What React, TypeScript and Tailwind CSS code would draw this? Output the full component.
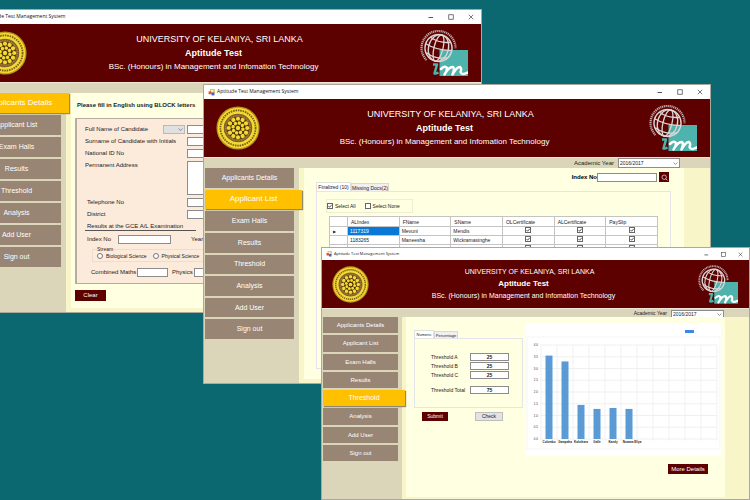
import React from "react";

type Size = "lg" | "sm";

const NAV = [
  "Applicants Details",
  "Applicant List",
  "Exam Halls",
  "Results",
  "Threshold",
  "Analysis",
  "Add User",
  "Sign out",
];

const BOX = "min-w-0 rounded-none border border-[#8c8c8c] bg-white outline-none";

function AppIcon({ size }: { size: Size }) {
  return (
    <svg viewBox="0 0 12 12" className={size === "lg" ? "size-[7px]" : "size-[6px]"} aria-hidden="true">
      <rect x="4" y="1" width="7" height="6" fill="#f4c65a" stroke="#dba94c" />
      <rect x="1" y="4" width="5" height="5" fill="#d9583b" />
      <rect x="6" y="6" width="5" height="5" fill="#2f6fc4" />
      <rect x="5" y="2" width="4" height="3" fill="#fff" opacity="0.7" />
    </svg>
  );
}

function Emblem({ className }: { className: string }) {
  const spokes = (n: number) => Array.from({ length: n }, (_, i) => (i * 360) / n);
  return (
    <svg viewBox="0 0 100 100" className={className} role="img" aria-label="University crest">
      <circle cx="50" cy="50" r="49" fill="#b8961e" />
      <circle cx="50" cy="50" r="46" fill="#f0d832" />
      <circle cx="50" cy="50" r="40" fill="none" stroke="#7d5a16" strokeWidth="4" strokeDasharray="3.5 2" />
      <circle cx="50" cy="50" r="34" fill="#86602c" stroke="#f2dc38" strokeWidth="3" />
      <circle cx="50" cy="50" r="28" fill="none" stroke="#b08c34" strokeWidth="2.5" strokeDasharray="2.5 2.5" />
      <circle cx="50" cy="50" r="25" fill="#4d2a08" />
      {spokes(12).map((a) => (
        <circle key={a} cx="50" cy="29" r="4.8" fill="#f0da34" transform={`rotate(${a} 50 50)`} />
      ))}
      {spokes(8).map((a) => (
        <circle key={a} cx="50" cy="38.5" r="4" fill="#f0da34" transform={`rotate(${a + 15} 50 50)`} />
      ))}
      <circle cx="50" cy="50" r="5" fill="#f0da34" />
    </svg>
  );
}

function ImLogo({ className }: { className: string }) {
  return (
    <svg viewBox="0 0 96 92" className={className} role="img" aria-label="Industrial Management">
      <rect x="39" y="40" width="57" height="52" fill="#4db3ac" />
      <path
        d="M13 60 A34 34 0 1 1 71 37"
        fill="none"
        stroke="#c0a9a9"
        strokeWidth="4.5"
        strokeDasharray="2.4 1.4"
      />
      <g transform="rotate(14 37 36)" fill="none" stroke="#ddd6d6" strokeWidth="2.6">
        <circle cx="37" cy="36" r="27" strokeWidth="3" />
        <ellipse cx="37" cy="36" rx="9" ry="27" />
        <ellipse cx="37" cy="36" rx="20" ry="27" />
        <path d="M10 34 Q37 42 64 34" />
        <path d="M16 19 Q37 27 58 19" />
        <path d="M16 51 Q37 60 58 51" />
      </g>
      <path d="M26 69 H34 L29 87 Q32 88 37 85" fill="none" stroke="#4db3ac" strokeWidth="5" strokeLinejoin="round" />
      <path
        d="M42 78 Q50 70 54 76 Q54 84 49 89 Q58 73 66 74 Q70 77 65 89 Q74 73 80 74 Q84 77 81 84 Q83 91 95 85"
        fill="none"
        stroke="#fff"
        strokeWidth="5"
        strokeLinecap="round"
        strokeLinejoin="round"
      />
    </svg>
  );
}

function Chevron() {
  return (
    <svg viewBox="0 0 8 8" className="pointer-events-none col-start-1 row-start-1 mr-[2px] size-[5px] justify-self-end" aria-hidden="true">
      <path d="M1 2.5 L4 5.5 L7 2.5" fill="none" stroke="#555" strokeWidth="1" />
    </svg>
  );
}

function Caption({ size }: { size: Size }) {
  const icon = size === "lg" ? "size-[6px]" : "size-[5px]";
  return (
    <div className={`flex items-center ${size === "lg" ? "gap-[14px] pr-[7px]" : "gap-[12px] pr-[6px]"}`}>
      <button type="button" aria-label="Minimize">
        <svg viewBox="0 0 12 12" className={icon}><path d="M1 7 H10" stroke="#555" strokeWidth="2" /></svg>
      </button>
      <button type="button" aria-label="Maximize">
        <svg viewBox="0 0 12 12" className={icon}><rect x="1.5" y="1.5" width="9" height="9" fill="none" stroke="#555" strokeWidth="1.6" /></svg>
      </button>
      <button type="button" aria-label="Close">
        <svg viewBox="0 0 12 12" className={icon}><path d="M1.5 1.5 L10.5 10.5 M10.5 1.5 L1.5 10.5" stroke="#444" strokeWidth="1.4" /></svg>
      </button>
    </div>
  );
}

function AcademicYear({ size, id }: { size: Size; id: string }) {
  const lg = size === "lg";
  return (
    <div className={`flex items-center gap-[4px] text-[#222] ${lg ? "text-[6px]" : "pt-[2px] text-[5px]"}`}>
      <label htmlFor={id}>Academic Year</label>
      <span className="grid items-center">
        <select
          id={id}
          className={`col-start-1 row-start-1 appearance-none pl-[1px] ${BOX} ${lg ? "h-[10px] w-[62px] text-[5px] leading-[8px]" : "h-[8px] w-[53px] text-[5px] leading-[6px]"}`}
        >
          <option>2016/2017</option>
        </select>
        <Chevron />
      </span>
    </div>
  );
}

interface ShellProps {
  size: Size;
  active: string;
  place: string;
  navGap: string;
  toolbar?: React.ReactNode;
  children: React.ReactNode;
}

function AppWindow({ size, active, place, navGap, toolbar, children }: ShellProps) {
  const lg = size === "lg";
  return (
    <section
      className={`absolute flex flex-col border border-[#a9a99d] bg-[#f8f6c8] ${place}`}
      aria-label="Aptitude Test Management System"
    >
      <div className={`flex shrink-0 items-center bg-white ${lg ? "h-[14px] gap-[2px] pl-[4px]" : "h-[12px] gap-[2px] pl-[4px]"}`}>
        <AppIcon size={size} />
        <span className={`flex-1 whitespace-nowrap font-['Open_Sans',sans-serif] text-[#111] ${lg ? "text-[5px]" : "text-[4px]"}`}>
          Aptitude Test Management System
        </span>
        <Caption size={size} />
      </div>
      <header className={`flex shrink-0 items-center border-b border-[#efe4d8] bg-[#5c0000] text-white ${lg ? "h-[59px] pl-[12px] pr-[13px]" : "h-[49px] pl-[10px] pr-[11px]"}`}>
        <Emblem className={lg ? "size-[44px]" : "size-[37px]"} />
        <div className={`flex-1 whitespace-nowrap pr-5 text-center ${lg ? "text-[9px] leading-[14px]" : "text-[8px] leading-[12px]"}`}>
          <p className={`pl-3 ${lg ? "text-[9px]" : "text-[7px]"}`}>UNIVERSITY OF KELANIYA, SRI LANKA</p>
          <h1 className="font-bold">Aptitude Test</h1>
          <p className={lg ? "text-[8px]" : "text-[7px]"}>BSc. (Honours) in Management and Infomation Technology</p>
        </div>
        <ImLogo className={lg ? "h-[46px] w-[48px]" : "h-[39px] w-[40px]"} />
      </header>
      <div className={`flex shrink-0 items-center justify-end bg-[#dbd6b9] ${lg ? "h-[10px] pr-[30px]" : "h-[8px] pr-[25px]"}`}>
        {toolbar}
      </div>
      <div className="flex min-h-0 flex-1">
        <nav className={`flex shrink-0 flex-col bg-[#dbd6b9] pl-px ${lg ? "w-[95px]" : "w-[80px]"}`}>
          <div className={`flex flex-col ${navGap}`}>
            {NAV.map((label) => {
              const on = label === active;
              return (
                <button
                  key={label}
                  type="button"
                  aria-current={on ? "page" : undefined}
                  className={[
                    "shrink-0 grow whitespace-nowrap text-center text-white",
                    lg ? "h-[19px]" : "h-[16px]",
                    on
                      ? "relative bg-[#ffc000] shadow-[1px_1px_1px_#8f8a6c]"
                      : "bg-[#988574]",
                    on
                      ? lg ? "w-[97px] text-[8px] leading-[12px]" : "w-[82px] text-[7px] leading-[10px]"
                      : lg ? "w-[89px] text-[7px] leading-[12px]" : "w-[75px] text-[6px] leading-[10px]",
                  ].join(" ")}
                >
                  {label}
                </button>
              );
            })}
          </div>
        </nav>
        <main className={`flex min-w-0 flex-1 ${lg ? "pb-[4px] pl-[5px] pr-[26px]" : "pb-[2px] pl-[4px] pr-[24px]"}`}>
          <div className="min-w-0 flex-1 bg-[#ffffe1]">{children}</div>
        </main>
      </div>
    </section>
  );
}

function FormRow({ id, label, tall, inset }: { id: string; label: string; tall?: boolean; inset?: boolean }) {
  return (
    <div className="flex items-start">
      <label htmlFor={id} className={`w-[102px] shrink-0 leading-[9px] ${inset ? "pl-[2px]" : ""}`}>{label}</label>
      {tall ? (
        <textarea id={id} className={`h-[34px] flex-1 resize-none ${BOX}`} />
      ) : (
        <input id={id} type="text" className={`h-[9px] flex-1 ${BOX}`} />
      )}
    </div>
  );
}

function DetailsForm() {
  return (
    <div className="pl-[4px] pr-[12px] pt-[8px] text-[6px] leading-[9px] text-[#222]">
      <h2 className="whitespace-nowrap pl-[2px] font-bold">Please fill in English using BLOCK letters</h2>
      <form className="mt-[8px] flex flex-col gap-[3px] border border-l-2 border-[#b5aca2] bg-[#fceadb] pb-[6px] pl-[8px] pr-[8px] pt-[6px]">
        <div className="flex gap-[2px]">
          <label htmlFor="name" className="w-[76px] shrink-0">Full Name of Candidate</label>
          <span className="grid items-center">
            <select id="title" aria-label="Title" className="col-start-1 row-start-1 h-[9px] w-[22px] appearance-none border border-[#b9b9b9] bg-[#e0e0e0]">
              <option></option>
            </select>
            <Chevron />
          </span>
          <input id="name" type="text" className={`h-[9px] flex-1 ${BOX}`} />
        </div>
        <FormRow id="surname" label="Surname of Candidate with Initials" />
        <FormRow id="nid" label="National ID No" />
        <FormRow id="address" label="Permanent Address" tall />
        <FormRow id="phone" label="Telephone No" inset />
        <FormRow id="district" label="District" inset />
        <h3 className="w-[111px] whitespace-nowrap border-b border-[#555] pl-[2px] leading-[8px]">Results at the GCE A/L Examination</h3>
        <div className="flex pl-[2px] pt-px">
          <label htmlFor="idx" className="w-[31px]">Index No</label>
          <input id="idx" type="text" className={`h-[9px] w-[53px] ${BOX}`} />
          <label htmlFor="yr" className="w-[26px] pl-[20px]">Year</label>
          <input id="yr" type="text" className={`ml-[20px] h-[9px] w-[53px] ${BOX}`} />
        </div>
        <fieldset className="ml-[7px] border border-[#efdccb] px-[4px] pb-px">
          <legend className="text-[5px] leading-[5px]">Stream</legend>
          <div className="flex items-center gap-[6px] whitespace-nowrap text-[5px] leading-[8px]">
            {["Biological Science", "Physical Science"].map((s) => (
              <label key={s} className="flex items-center gap-[3px]">
                <input type="radio" name="stream" className="size-[6px] appearance-none rounded-full border border-[#777] bg-white" />
                {s}
              </label>
            ))}
          </div>
        </fieldset>
        <div className="flex pl-[6px] pt-[3px]">
          <label htmlFor="maths" className="w-[46px] whitespace-nowrap">Combined Maths</label>
          <input id="maths" type="text" className={`h-[9px] w-[31px] ${BOX}`} />
          <label htmlFor="phys" className="w-[26px] pl-[4px]">Physics</label>
          <input id="phys" type="text" className={`h-[9px] w-[31px] ${BOX}`} />
        </div>
      </form>
      <button type="button" className="mt-[6px] h-[11px] w-[31px] bg-[#5c0000] text-white">Clear</button>
    </div>
  );
}

function Check({ label, checked, bare }: { label: string; checked?: boolean; bare?: boolean }) {
  return (
    <label className="inline-flex items-center gap-[2px] align-top">
      <span className="grid place-items-center">
        <input
          type="checkbox"
          defaultChecked={checked}
          aria-label={bare ? label : undefined}
          className="col-start-1 row-start-1 size-[6px] appearance-none border border-[#666] bg-white"
        />
        {checked && (
          <svg viewBox="0 0 12 12" className="pointer-events-none col-start-1 row-start-1 size-[6px]" aria-hidden="true">
            <path d="M3 6 L5.2 8.5 L9.5 3.5" fill="none" stroke="#222" strokeWidth="1.5" />
          </svg>
        )}
      </span>
      {!bare && label}
    </label>
  );
}

const APPLICANTS = [
  ["1117319", "Mevuni", "Mendis"],
  ["1183265", "Maneesha", "Wickramasinghe"],
  ["1320075", "Chamika", "Withanage"],
];

function ApplicantList() {
  return (
    <div className="flex h-full flex-col pb-[10px] pl-[12px] pr-[13px] pt-[4px] text-[5px] leading-[8px] text-[#222]">
      <div className="flex items-center justify-end text-[6px]">
        <label htmlFor="find" className="font-bold text-black">Index No</label>
        <input id="find" type="text" className={`h-[9px] w-[60px] ${BOX}`} />
        <button type="button" aria-label="Search" className="ml-[2px] mr-[2px] grid size-[10px] place-items-center bg-[#5c0000]">
          <svg viewBox="0 0 12 12" className="size-[7px]">
            <circle cx="5.5" cy="5.5" r="3.8" fill="none" stroke="#fff" strokeWidth="1.1" />
            <path d="M8.3 8.3 L11 11" stroke="#fff" strokeWidth="1.2" />
          </svg>
        </button>
      </div>
      <div className="flex items-end" role="tablist">
        <button role="tab" type="button" aria-selected="true" className="h-[9px] w-[35px] whitespace-nowrap border border-b-0 border-[#e0e0dc] bg-white leading-[7px]">Finalized (10)</button>
        <button role="tab" type="button" aria-selected="false" className="h-[8px] w-[38px] whitespace-nowrap border border-b-0 border-[#d8d8d8] bg-[#f0f0f0] leading-[6px]">Missing Docs(2)</button>
      </div>
      <div className="flex-1 border border-[#e4e4ea] px-[12px] pt-[7px]" role="tabpanel">
        <div className="ml-[-3px] flex w-[87px] items-center gap-[9px] border border-[#f0eed2] py-[2px]">
          <Check label="Select All" checked />
          <Check label="Select None" />
        </div>
        <table className="mt-[3px] w-full table-fixed border-collapse border border-[#444] bg-white text-left">
          <thead>
            <tr className="h-[10px]">
              <th className="w-[18px] border border-[#c4c4c4]" aria-label="Row" />
              {["ALIndex", "FName", "SName", "OLCertificate", "ALCertificate", "PaySlip"].map((h) => (
                <th key={h} className="border border-[#c4c4c4] py-0 pl-[3px] font-normal">{h}</th>
              ))}
            </tr>
          </thead>
          <tbody>
            {APPLICANTS.map((row, i) => (
              <tr key={row[0]} className="h-[9px]">
                <td className="border border-[#c4c4c4] p-0 pl-[3px] text-[4px] leading-[7px]">{i === 0 ? "▶" : ""}</td>
                {row.map((cell, c) => (
                  <td
                    key={cell}
                    className={`border border-[#c4c4c4] p-0 pl-[2px] ${i === 0 && c === 0 ? "bg-[#0a78d7] text-white" : ""}`}
                  >
                    {cell}
                  </td>
                ))}
                {["O/L", "A/L", "Pay slip"].map((n) => (
                  <td key={n} className="border border-[#c4c4c4] p-0 text-center">
                    <Check label={`${n} ${row[1]}`} checked bare />
                  </td>
                ))}
              </tr>
            ))}
          </tbody>
        </table>
      </div>
    </div>
  );
}

const DISTRICTS: [string, number][] = [
  ["Colombo", 3.55],
  ["Gampaha", 3.3],
  ["Kaluthara", 1.45],
  ["Galle", 1.28],
  ["Kandy", 1.32],
  ["Nuwara Eliya", 1.28],
];

function Chart() {
  const bottom = 116;
  const unit = 23.5;
  return (
    <svg viewBox="0 0 195 133" className="w-full bg-white font-['Liberation_Sans',sans-serif]" role="img" aria-label="Applicants by district">
      <rect x="1" y="14" width="193" height="112" fill="none" stroke="#f5f5f5" />
      <rect x="159" y="7" width="9" height="3" fill="#3b86ea" />
      {Array.from({ length: 9 }, (_, i) => {
        const y = bottom - i * (unit / 2);
        return (
          <g key={i}>
            <path d={`M14 ${y} H191`} stroke="#efefef" strokeWidth="1" />
            <text x="12" y={y + 1} textAnchor="end" fontSize="3" fill="#333">{(i / 2).toFixed(1)}</text>
          </g>
        );
      })}
      {Array.from({ length: 12 }, (_, i) => (
        <path key={i} d={`M${15 + i * 16} 22 V118`} stroke="#f1f1f1" strokeWidth="1" />
      ))}
      {DISTRICTS.map(([name, v], i) => (
        <g key={name}>
          <rect x={19.5 + i * 16} y={bottom - v * unit} width="7" height={v * unit} fill="#5b9bd5" />
          <text x={(name === "Nuwara Eliya" ? 26 : 23) + i * 16} y="120" textAnchor="middle" fontSize="3" fontWeight="bold" fill="#222">{name}</text>
        </g>
      ))}
    </svg>
  );
}

function ThresholdField({ id, label, value }: { id: string; label: string; value: string }) {
  return (
    <div className="flex items-center">
      <label htmlFor={id} className="w-[39px] whitespace-nowrap">{label}</label>
      <input id={id} type="text" defaultValue={value} className={`h-[8px] w-[39px] text-center font-bold leading-[6px] ${BOX}`} />
    </div>
  );
}

function ThresholdPage() {
  return (
    <div className="flex flex-col pl-[8px] pr-[4px] pt-[6px] text-[5px] leading-[7px] text-[#222]">
      <div className="flex gap-[3px]">
        <div className="w-[109px] shrink-0 pt-[7px]">
          <div className="flex items-end" role="tablist">
            <button role="tab" type="button" aria-selected="true" className="h-[8px] w-[20px] border border-b-0 border-[#e0e0dc] bg-white text-[4px] leading-[6px]">Numeric</button>
            <button role="tab" type="button" aria-selected="false" className="h-[7px] w-[24px] border border-b-0 border-[#d8d8d8] bg-[#f0f0f0] text-[4px] leading-[5px]">Percentage</button>
          </div>
          <div className="flex flex-col gap-px border border-[#e4e4ea] pb-[13px] pl-[16px] pt-[14px]" role="tabpanel">
            <ThresholdField id="ta" label="Threshold A" value="25" />
            <ThresholdField id="tb" label="Threshold B" value="25" />
            <ThresholdField id="tc" label="Threshold C" value="25" />
            <div className="pt-[6px]">
              <ThresholdField id="tt" label="Threshold Total" value="75" />
            </div>
          </div>
          <div className="mt-[4px] flex gap-[27px] pl-[8px]">
            <button type="button" className="h-[9px] w-[26px] bg-[#5c0000] text-white">Submit</button>
            <button type="button" className="h-[9px] w-[28px] border border-[#bdbdbd] bg-[#e3e3e3]">Check</button>
          </div>
        </div>
        <div className="min-w-0 flex-1">
          <Chart />
        </div>
      </div>
      <button type="button" className="mr-[13px] mt-[8px] h-[10px] w-[40px] self-end bg-[#5c0000] text-[6px] text-white">More Details</button>
    </div>
  );
}

export default function App() {
  return (
    <div className="relative h-screen w-full overflow-hidden bg-[#0b6870] font-['Liberation_Sans',Arial,sans-serif]">
      <AppWindow size="lg" active="Applicants Details" place="left-[-30px] top-[9px] h-[304px] w-[512px]" navGap="h-[174px] gap-[2px]">
        <DetailsForm />
      </AppWindow>
      <AppWindow
        size="lg"
        active="Applicant List"
        place="left-[203px] top-[84px] h-[300px] w-[508px]"
        navGap="h-[171px] gap-[2px]"
        toolbar={<AcademicYear size="lg" id="year-list" />}
      >
        <ApplicantList />
      </AppWindow>
      <AppWindow
        size="sm"
        active="Threshold"
        place="left-[321px] top-[247px] h-[253px] w-[429px]"
        navGap="h-[144px] gap-[2px]"
        toolbar={<AcademicYear size="sm" id="year-threshold" />}
      >
        <ThresholdPage />
      </AppWindow>
    </div>
  );
}
